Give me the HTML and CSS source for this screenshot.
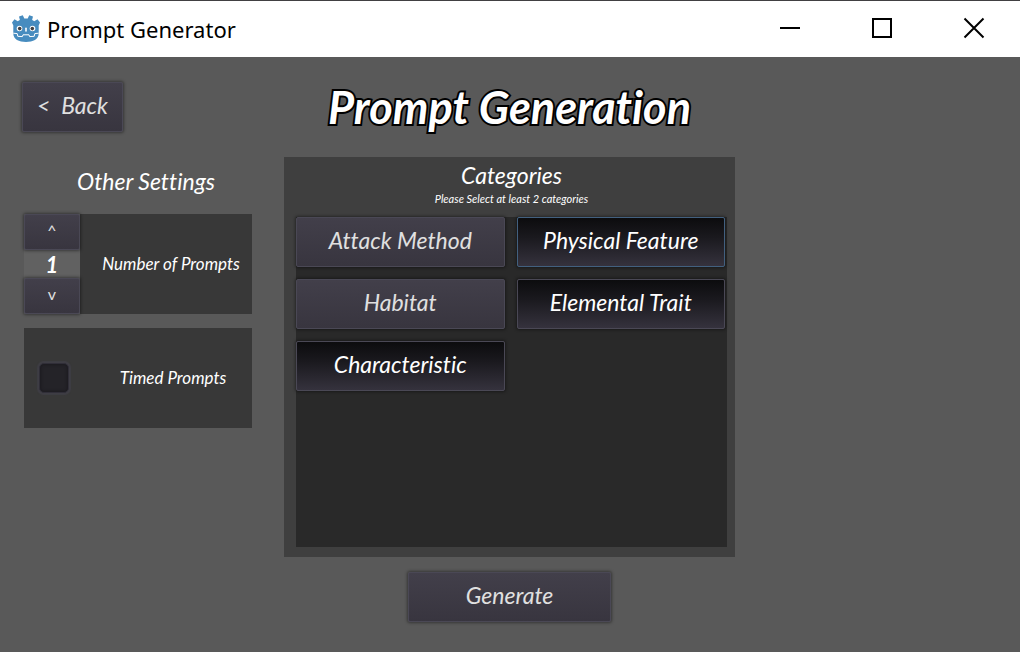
FILE: index.html
```html
<!DOCTYPE html>
<html lang="en">
<head>
<meta charset="utf-8">
<title>Prompt Generator</title>
<link rel="stylesheet" href="styles.css">
</head>
<body>
<header class="titlebar">
  <svg class="app-icon" viewBox="0 0 30 30" aria-hidden="true">
    <path fill="#478cbf" d="M1 8.500 3.500 5.300 6.800 7.200Q7.900 6.400 8.900 6L8 2.400 11.800 1.200 13.300 4.500H16.700L18.200 1.200 22 2.400 21.100 6Q22.100 6.400 23.200 7.200L26.500 5.300 29 8.500 27.700 11.500V19.600C27.700 25.500 22 28 15 28S2.300 25.500 2.300 19.600V11.500Z"/>
    <path fill="none" stroke="#fff" stroke-width="1" d="M2.300 19.200 6.200 19.600 6.800 22.300 11.400 22.600 12 20.800H18L18.600 22.600 23.200 22.300 23.800 19.600 27.700 19.200"/>
    <circle cx="8.500" cy="14.500" r="2.800" fill="#fff"/>
    <circle cx="21.500" cy="14.500" r="2.800" fill="#fff"/>
    <circle cx="8.700" cy="14.600" r="1.800" fill="#414042"/>
    <circle cx="21.300" cy="14.600" r="1.800" fill="#414042"/>
    <rect x="14.200" y="13.500" width="1.600" height="4.200" rx="0.800" fill="#fff"/>
  </svg>
  <span class="app-name">Prompt Generator</span>
  <div class="window-controls">
    <button class="window-button" type="button" aria-label="Minimize"><svg viewBox="0 0 22 22"><path d="M1 11H21"/></svg></button>
    <button class="window-button" type="button" aria-label="Maximize"><svg viewBox="0 0 22 22"><path d="M2 2H20V20H2Z"/></svg></button>
    <button class="window-button" type="button" aria-label="Close"><svg viewBox="0 0 22 22"><path d="M1.500 1.500 20.500 20.500M20.500 1.500 1.500 20.500"/></svg></button>
  </div>
</header>

<main class="screen">
  <div class="corner"><button class="btn back" type="button">&lt;&nbsp; Back</button></div>
  <h1 class="title">Prompt Generation</h1>

  <section class="settings">
    <h2 class="settings-title">Other Settings</h2>
    <div class="card">
      <div class="stepper">
        <button class="btn step" type="button" aria-label="More prompts">^</button>
        <input class="count" id="count" type="text" inputmode="numeric" value="1">
        <button class="btn step" type="button" aria-label="Fewer prompts">v</button>
      </div>
      <label class="card-label" for="count">Number of Prompts</label>
    </div>
    <div class="card">
      <div class="check-cell"><input class="check" id="timed" type="checkbox"></div>
      <label class="card-label" for="timed">Timed Prompts</label>
    </div>
  </section>

  <section class="categories">
    <h2 class="categories-title">Categories</h2>
    <p class="hint">Please Select at least 2 categories</p>
    <div class="category-list">
      <button class="btn category" type="button" aria-pressed="false">Attack Method</button>
      <button class="btn category pressed focused" type="button" aria-pressed="true">Physical Feature</button>
      <button class="btn category" type="button" aria-pressed="false">Habitat</button>
      <button class="btn category pressed" type="button" aria-pressed="true">Elemental Trait</button>
      <button class="btn category pressed" type="button" aria-pressed="true">Characteristic</button>
    </div>
  </section>

  <div class="actions"><button class="btn generate" type="button">Generate</button></div>
</main>
</body>
</html>
```

FILE: styles.css
```css
* { box-sizing: border-box; }

body {
  margin: 0;
  min-height: 100vh;
  display: flex;
  flex-direction: column;
  background: #595959;
  color: #fff;
  font-family: Lato, "Open Sans", sans-serif;
  font-style: italic;
  font-variant-ligatures: none;
}

button, input { font: inherit; color: inherit; font-variant-ligatures: none; }

h1, h2, p { margin: 0; font-weight: 400; }

.titlebar {
  display: flex;
  align-items: center;
  height: 57px;
  padding-left: 11px;
  border-top: 1px solid #414042;
  background: #fff;
  color: #000;
  font-family: "Noto Sans", "Open Sans", sans-serif;
  font-style: normal;
}

.app-icon { width: 30px; height: 30px; }

.app-name { margin-left: 6px; font-size: 22px; line-height: 32px; }

.window-controls { display: flex; margin-left: auto; }

.window-button {
  display: grid;
  place-items: center;
  width: 92px;
  height: 56px;
  padding: 0 0 2px;
  border: 0;
  background: none;
}

.window-button svg {
  width: 22px;
  height: 22px;
  fill: none;
  stroke: #000;
  stroke-width: 2;
}

.screen {
  flex: 1;
  display: grid;
  grid-template-columns: 284fr 451fr 285fr;
  grid-template-rows: 100px auto 1fr;
}

.corner { padding: 25px 22px; }

.btn {
  padding: 0 0 4px;
  border: 1px solid #4a4855;
  border-radius: 2px;
  background: linear-gradient(#423f4a, #38353f);
  box-shadow: 0 0 3px 1px rgba(0, 0, 0, 0.4);
  color: #e0e0e0;
  font-size: 23px;
  line-height: 32px;
}

.back { width: 101px; height: 50px; }

.title {
  padding-top: 18px;
  font-size: 45px;
  font-weight: 700;
  line-height: 64px;
  text-align: center;
  white-space: nowrap;
  -webkit-text-stroke: 4px #000;
  paint-order: stroke fill;
}

.settings {
  grid-column: 1;
  display: flex;
  flex-direction: column;
  gap: 14px;
  padding: 8px 32px 0 24px;
}

.settings-title {
  margin-bottom: 3px;
  padding-left: 16px;
  font-size: 23px;
  line-height: 32px;
  text-align: center;
}

.card {
  display: flex;
  min-height: 100px;
  background: #383838;
}

.stepper {
  display: flex;
  flex-direction: column;
  width: 56px;
  background: #616161;
}

.step {
  height: 36px;
  font-size: 16px;
  font-style: normal;
  line-height: 20px;
}

.count {
  width: 100%;
  height: 28px;
  padding: 0;
  border: 0;
  background: none;
  font-size: 22px;
  font-weight: 700;
  text-align: center;
}

.card-label {
  flex: 1;
  align-self: center;
  padding-left: 10px;
  font-size: 17px;
  line-height: 24px;
  text-align: center;
}

.check-cell { display: grid; place-items: center; width: 60px; }

.check {
  appearance: none;
  width: 30px;
  height: 30px;
  margin: 0;
  border: 1px solid #302e38;
  border-radius: 5px;
  background: #242328;
  box-shadow: 0 0 1px 2px #3e3d44, inset 0 0 3px 1px #1c1b20;
}

.categories {
  display: flex;
  flex-direction: column;
  height: 400px;
  padding: 2px 8px 10px 12px;
  background: #3f3f3f;
  text-align: center;
}

.categories-title { font-size: 23px; line-height: 32px; }

.hint { padding-bottom: 10px; font-size: 11px; line-height: 16px; }

.category-list {
  flex: 1;
  display: grid;
  grid-template-columns: 1fr 1fr;
  align-content: start;
  gap: 12px;
  padding-right: 2px;
  background: #292929;
}

.category { height: 50px; }

.pressed {
  background: linear-gradient(#0c0c0e, #1a191e 40%, #35323d);
  color: #fff;
}

.focused { border-color: #42607f; }

.actions { grid-column: 2; padding-top: 15px; text-align: center; }

.generate { width: 45%; height: 50px; }
```
